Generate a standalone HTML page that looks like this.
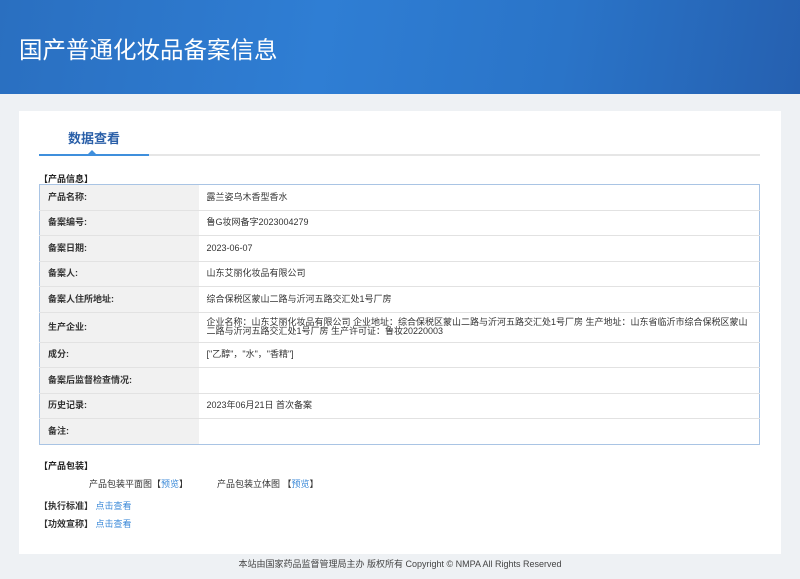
<!DOCTYPE html>
<html><head><meta charset="utf-8"><style>
*{margin:0;padding:0;box-sizing:border-box}
body{width:800px;height:579px;background:#eef1f4;font-family:"Liberation Sans","Noto Sans CJK SC",sans-serif;font-size:9px;color:#333;position:relative;overflow:hidden}
.hd{position:absolute;left:0;top:0;width:800px;height:94px;background:linear-gradient(100deg,#2a6fc0 0%,#2f7ed4 40%,#2a74c8 70%,#2560b0 100%)}
.hd h1{position:absolute;left:19px;top:31px;font-size:23.5px;font-weight:normal;color:#fff;letter-spacing:0}
.card{position:absolute;left:19px;top:111px;width:762px;height:443px;background:#fff}
.tab{position:absolute;left:68px;top:128px;font-size:13px;color:#2a5fa8;font-weight:bold}
.line{position:absolute;left:39px;top:154px;width:721px;height:2px;background:#e6e6e6}
.line2{position:absolute;left:39px;top:154px;width:110px;height:2px;background:#3f8fdc}
.tri{position:absolute;left:88px;top:150px;width:0;height:0;border-left:4px solid transparent;border-right:4px solid transparent;border-bottom:4px solid #3f8fdc}
.sec{position:absolute;font-weight:bold;font-size:9px;color:#222}
table{position:absolute;left:39px;top:184px;width:721px;border-collapse:collapse;border:1px solid #a9c4e4}
td{border-bottom:1px solid #e2e2e2;height:25.5px;padding:0 8px;vertical-align:middle;line-height:9px}
td.l{width:159px;background:#f1f1f1;font-weight:bold;color:#333}
a{color:#3c8ad8;text-decoration:none}
.ft{position:absolute;left:0;top:557px;width:800px;text-align:center;font-size:9px;color:#444}
</style></head><body>
<div class="hd"><h1>国产普通化妆品备案信息</h1></div>
<div class="card"></div>
<div class="tab">数据查看</div>
<div class="line"></div><div class="line2"></div><div class="tri"></div>
<div class="sec" style="left:39px;top:172px">【产品信息】</div>
<table>
<tr><td class="l">产品名称:</td><td>露兰姿乌木香型香水</td></tr>
<tr><td class="l">备案编号:</td><td>鲁G妆网备字2023004279</td></tr>
<tr><td class="l">备案日期:</td><td>2023-06-07</td></tr>
<tr><td class="l">备案人:</td><td>山东艾丽化妆品有限公司</td></tr>
<tr><td class="l">备案人住所地址:</td><td>综合保税区蒙山二路与沂河五路交汇处1号厂房</td></tr>
<tr><td class="l" style="height:30px">生产企业:</td><td style="line-height:9px">企业名称：山东艾丽化妆品有限公司 企业地址：综合保税区蒙山二路与沂河五路交汇处1号厂房 生产地址：山东省临沂市综合保税区蒙山二路与沂河五路交汇处1号厂房 生产许可证：鲁妆20220003</td></tr>
<tr><td class="l">成分:</td><td>["乙醇"，"水"，"香精"]</td></tr>
<tr><td class="l">备案后监督检查情况:</td><td></td></tr>
<tr><td class="l">历史记录:</td><td>2023年06月21日 首次备案</td></tr>
<tr><td class="l" style="border-bottom:none">备注:</td><td style="border-bottom:none"></td></tr>
</table>
<div class="sec" style="left:39px;top:459px">【产品包装】</div>
<div style="position:absolute;left:89px;top:477px">产品包装平面图【<a>预览</a>】</div>
<div style="position:absolute;left:217px;top:477px">产品包装立体图 【<a>预览</a>】</div>
<div style="position:absolute;left:39px;top:499px"><b>【执行标准】</b> <a>点击查看</a></div>
<div style="position:absolute;left:39px;top:517px"><b>【功效宣称】</b> <a>点击查看</a></div>
<div class="ft">本站由国家药品监督管理局主办 版权所有 Copyright © NMPA All Rights Reserved</div>
</body></html>
